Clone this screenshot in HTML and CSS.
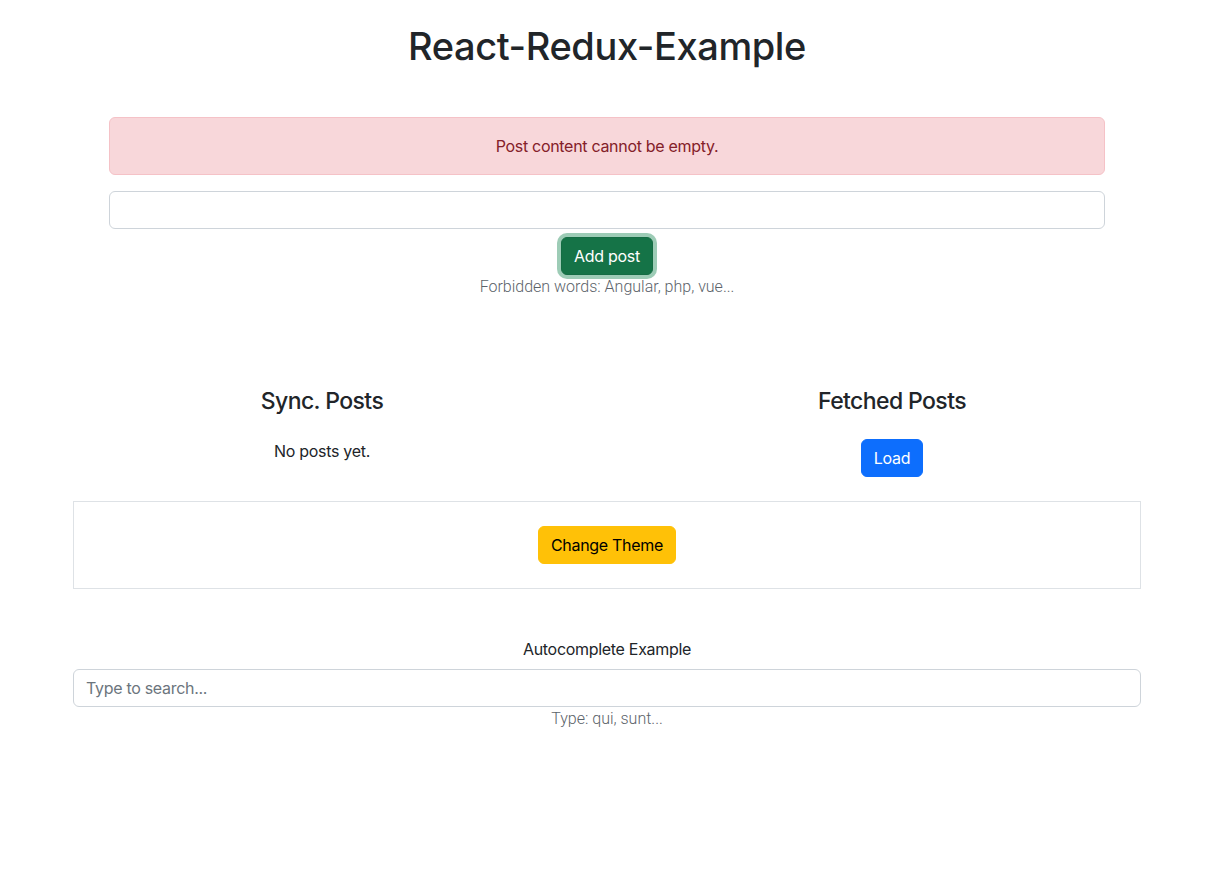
FILE: index.html
```html
<!DOCTYPE html>
<html lang="en">
<head>
<meta charset="utf-8">
<title>React-Redux-Example</title>
<link rel="stylesheet" href="styles.css">
</head>
<body>
<div class="page">
  <h1 class="title">React-Redux-Example</h1>

  <section class="post-form">
    <div class="alert">Post content cannot be empty.</div>
    <input class="field" type="text" aria-label="Post content">
    <div class="form-actions">
      <button class="btn btn-success" type="button">Add post</button>
      <p class="hint">Forbidden words: Angular, php, vue...</p>
    </div>
  </section>

  <section class="posts-row">
    <div class="col">
      <h2 class="col-title">Sync. Posts</h2>
      <p class="empty">No posts yet.</p>
    </div>
    <div class="col">
      <h2 class="col-title">Fetched Posts</h2>
      <button class="btn btn-primary" type="button">Load</button>
    </div>
  </section>

  <section class="theme-box">
    <button class="btn btn-warning" type="button">Change Theme</button>
  </section>

  <section class="autocomplete">
    <p class="ac-label">Autocomplete Example</p>
    <input class="field" type="text" placeholder="Type to search...">
    <p class="hint">Type: qui, sunt...</p>
  </section>
</div>
</body>
</html>
```

FILE: styles.css
```css
* { box-sizing: border-box; }

html, body {
  margin: 0;
  background: #fff;
}

body {
  padding-right: 3px;
  font-family: Inter, "Liberation Sans", sans-serif;
  font-size: 16px;
  line-height: 24px;
  letter-spacing: -0.3px;
  color: #212529;
}

.page {
  width: 1140px;
  margin: 0 auto;
  display: flex;
  flex-direction: column;
}

.title {
  margin: 22px 0 0;
  font-size: 38px;
  line-height: 48px;
  font-weight: 500;
  text-align: center;
  letter-spacing: -0.4px;
}

.post-form {
  margin: 47px 72px 0;
  display: flex;
  flex-direction: column;
}

.alert {
  padding: 16px;
  border: 1px solid #f5c2c7;
  border-radius: 6px;
  background: #f8d7da;
  color: #842029;
  text-align: center;
}

.field {
  display: block;
  width: 100%;
  height: 38px;
  margin: 16px 0 0;
  padding: 6px 12px;
  border: 1px solid #ced4da;
  border-radius: 6px;
  background: #fff;
  font: inherit;
  letter-spacing: -0.3px;
  color: #212529;
  outline: none;
}

.field::placeholder { color: #6c757d; }

.form-actions {
  margin-top: 8px;
  display: flex;
  flex-direction: column;
  align-items: center;
}

.btn {
  display: inline-block;
  height: 38px;
  padding: 6px 12px;
  border: 1px solid transparent;
  border-radius: 6px;
  font: inherit;
  font-size: 16px;
  line-height: 24px;
  letter-spacing: -0.3px;
  cursor: pointer;
}

.btn-success {
  background: #157347;
  border-color: #146c43;
  color: #fff;
  box-shadow: 0 0 0 4px rgba(60, 153, 110, 0.5);
}

.btn-primary {
  background: #0d6efd;
  border-color: #0d6efd;
  color: #fff;
}

.btn-warning {
  background: #ffc107;
  border-color: #ffc107;
  color: #000;
}

.hint {
  margin: 0;
  font-family: Roboto, Inter, sans-serif;
  font-weight: 300;
  letter-spacing: 0;
  color: #5c636a;
  text-align: center;
}

.posts-row {
  margin-top: 88px;
  display: grid;
  grid-template-columns: 1fr 1fr;
}

.col {
  display: flex;
  flex-direction: column;
  align-items: center;
}

.col-title {
  margin: 0 0 23px;
  font-size: 23px;
  line-height: 29px;
  font-weight: 500;
  letter-spacing: -0.6px;
}

.empty {
  margin: 0;
}

.theme-box {
  margin: 24px 36px 0;
  padding: 24px;
  border: 1px solid #dee2e6;
  display: flex;
  justify-content: center;
}

.autocomplete {
  margin: 48px 36px 0;
  display: flex;
  flex-direction: column;
}

.ac-label {
  margin: 0;
  text-align: center;
}

.autocomplete .field {
  margin-top: 8px;
}
```
